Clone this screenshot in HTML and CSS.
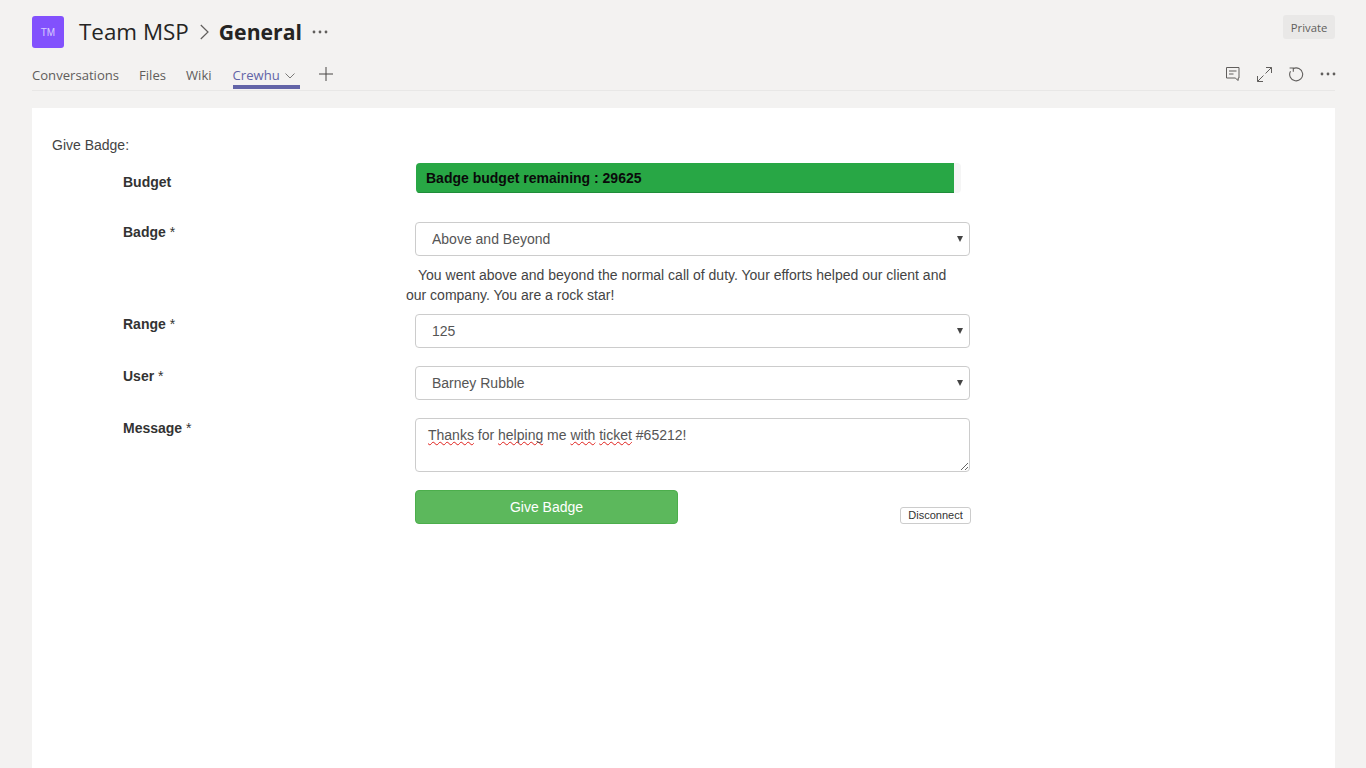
FILE: index.html
```html
<!DOCTYPE html>
<html lang="en">
<head>
<meta charset="utf-8">
<title>Team MSP - General</title>
<link rel="stylesheet" href="styles.css">
</head>
<body>
<div class="app">
  <header class="head">
    <div class="title-row">
      <div class="avatar">TM</div>
      <span class="team">Team MSP</span>
      <svg class="crumb" width="9" height="16" viewBox="0 0 9 16"><path d="M.8 1l7.200 7-7.200 7" fill="none" stroke="#605e5c" stroke-width="1.200"/></svg>
      <span class="channel">General</span>
      <svg class="dots title-dots" width="16" height="4" viewBox="0 0 16 4"><circle cx="2" cy="2" r="1.400"/><circle cx="8" cy="2" r="1.400"/><circle cx="14" cy="2" r="1.400"/></svg>
      <span class="private">Private</span>
    </div>
    <nav class="tabs">
      <a class="tab">Conversations</a>
      <a class="tab">Files</a>
      <a class="tab">Wiki</a>
      <a class="tab active">Crewhu<svg class="chev" width="10" height="6" viewBox="0 0 10 6"><path d="M.5.5l4.500 4.500 4.500-4.500" fill="none" stroke="#7a7977" stroke-width="1"/></svg></a>
      <svg class="plus" width="14" height="14" viewBox="0 0 14 14"><path d="M7 0v14M0 7h14" stroke="#484644" stroke-width="1"/></svg>
      <div class="tools">
        <svg width="14" height="14" viewBox="0 0 14 14" fill="none" stroke="#605e5c" stroke-width="1"><path d="M.5.500h12.500v10.500h-.8v2.500l-3-2.500H.5z"/><path d="M3 4h7.500M3 7h4.500"/></svg>
        <svg width="15" height="15" viewBox="0 0 15 15" fill="none" stroke="#605e5c" stroke-width="1"><path d="M8.500 6.500l6-6M9 .5h5.500V6M6.500 8.500l-6 6M.5 9v5.500H6"/></svg>
        <svg width="15" height="15" viewBox="0 0 15 15" fill="none" stroke="#605e5c" stroke-width="1.100"><path d="M4 1.700a6.500 6.500 0 1 1-2.500 2.500"/><path d="M.6 1h3.700v3.700"/></svg>
        <svg class="dots tool-dots" width="16" height="4" viewBox="0 0 16 4"><circle cx="2" cy="2" r="1.400"/><circle cx="8" cy="2" r="1.400"/><circle cx="14" cy="2" r="1.400"/></svg>
      </div>
    </nav>
  </header>
  <main class="panel">
    <p class="form-title">Give Badge:</p>
    <form class="form">
      <div class="row row-budget">
        <span class="label">Budget</span>
        <div class="progress"><div class="bar" style="width:538px">Badge budget remaining : 29625</div></div>
      </div>
      <div class="row row-badge">
        <label class="label">Badge <span class="req">*</span></label>
        <div>
          <div class="select"><select class="control"><option>Above and Beyond</option></select></div>
          <p class="desc">You went above and beyond the normal call of duty. Your efforts helped our client and our company. You are a rock star!</p>
        </div>
      </div>
      <div class="row">
        <label class="label">Range <span class="req">*</span></label>
        <div class="select"><select class="control"><option>125</option></select></div>
      </div>
      <div class="row">
        <label class="label">User <span class="req">*</span></label>
        <div class="select"><select class="control"><option>Barney Rubble</option></select></div>
      </div>
      <div class="row">
        <label class="label">Message <span class="req">*</span></label>
        <div class="textarea"><span class="typo">Thanks</span> for <span class="typo">helping</span> me <span class="typo">with</span> <span class="typo">ticket</span> #65212!</div>
      </div>
      <div class="row row-actions">
        <span></span>
        <div class="actions">
          <button type="button" class="give">Give Badge</button>
          <button type="button" class="disconnect">Disconnect</button>
        </div>
      </div>
    </form>
  </main>
</div>
</body>
</html>
```
FILE: styles.css
```css
* { box-sizing: border-box; }
html, body { height: 100%; }
body {
  margin: 0;
  background: #f3f2f1;
  font-family: "Liberation Sans", Arial, sans-serif;
  color: #333;
  overflow: hidden;
}
.app {
  height: 768px;
  padding: 0 31px 0 32px;
  display: flex;
  flex-direction: column;
}
.head {
  font-family: "Open Sans", "Noto Sans", sans-serif;
  height: 108px;
  flex: none;
}
.title-row {
  display: flex;
  align-items: center;
  height: 64px;
}
.avatar {
  width: 32px;
  height: 32px;
  border-radius: 3px;
  background: #8251fd;
  color: #d9ccff;
  font-size: 10px;
  display: flex;
  align-items: center;
  justify-content: center;
  font-family: "Liberation Sans", sans-serif;
}
.team {
  margin-left: 15px;
  margin-bottom: 2px;
  font-size: 22.400px;
  color: #252423;
}
.crumb { margin-left: 11px; }
.channel {
  margin-left: 10px;
  margin-bottom: 2px;
  font-size: 21.200px;
  font-weight: 700;
  color: #252423;
}
.dots { fill: #605e5c; }
.title-dots { margin-left: 10px; }
.private {
  margin-left: auto;
  align-self: flex-start;
  margin-top: 15px;
  height: 24px;
  width: 52px;
  background: #e9e8e7;
  border-radius: 3px;
  font-size: 11.300px;
  color: #605e5c;
  display: flex;
  align-items: center;
  justify-content: center;
}
.tabs {
  display: flex;
  align-items: flex-start;
  height: 27px;
  border-bottom: 1px solid #e8e7e6;
  font-size: 13.100px;
  color: #5f5d5b;
}
.tab {
  display: block;
  height: 25px;
  line-height: 22px;
  margin-right: 20px;
}
.tab.active {
  color: #6264a7;
  border-bottom: 4px solid #6264a7;
  height: 25px;
  width: 67px;
  margin-left: 1px;
  margin-right: 19px;
  white-space: nowrap;
}
.chev { margin-left: 5px; vertical-align: 1px; }
.plus { margin-top: 3px; }
.tools {
  margin-left: auto;
  margin-right: -1px;
  display: flex;
  align-items: center;
  gap: 17px;
  height: 18px;
  margin-top: 1px;
}
.tool-dots { margin-left: -1px; }
.panel {
  flex: 1;
  background: #fff;
  padding: 29px 0 0 20px;
  font-size: 14px;
  line-height: 16px;
}
.form-title { margin: 0; color: #444; }
.form { margin-left: 71px; width: 848px; margin-top: 6px; }
.row {
  display: grid;
  grid-template-columns: 292px 556px;
  margin-bottom: 18px;
}
.label { font-weight: 700; padding-top: 2px; color: #333; }
.req { font-weight: 400; }
.row-budget { margin-bottom: 29px; }
.row-budget .label { padding-top: 15px; }
.row-badge { margin-bottom: 9px; }
.progress {
  margin-left: 1px;
  width: 545px;
  height: 30px;
  background: #f5f5f5;
  border-radius: 4px;
  overflow: hidden;
  margin-top: 4px;
}
.bar {
  height: 30px;
  background: #28a745;
  border-bottom: 1px solid #1f8c39;
  color: #0a0a0a;
  font-weight: 700;
  padding-left: 10px;
  line-height: 30px;
}
.select { position: relative; width: 555px; }
.select::after {
  content: "";
  position: absolute;
  right: 7px;
  top: 14px;
  width: 0;
  height: 0;
  border-left: 3px solid transparent;
  border-right: 3px solid transparent;
  border-top: 6px solid #444;
  pointer-events: none;
}
.control {
  display: block;
  width: 555px;
  height: 34px;
  border: 1px solid #ccc;
  border-radius: 4px;
  background: #fff;
  padding: 6px 16px;
  font: 14px "Liberation Sans", sans-serif;
  color: #555;
  appearance: none;
}
.desc {
  margin: 9px 0 0 -9px;
  width: 552px;
  font-size: 14px;
  line-height: 20px;
  text-indent: 12px;
  color: #444;
}
.textarea {
  width: 555px;
  height: 54px;
  border: 1px solid #ccc;
  border-radius: 4px;
  padding: 7px 12px;
  color: #555;
  font-size: 14px;
  line-height: 18px;
  overflow: auto;
  resize: both;
}
.typo {
  text-decoration: underline wavy #e0201b 1px;
  text-decoration-skip-ink: none;
  text-underline-offset: 1px;
}
.row-actions { margin-bottom: 0; }
.actions {
  display: flex;
  align-items: flex-end;
  justify-content: space-between;
}
.give {
  width: 263px;
  height: 34px;
  border: 1px solid #4cae4c;
  border-radius: 4px;
  background: #5cb85c;
  color: #fff;
  font: 14px "Liberation Sans", sans-serif;
}
.disconnect {
  width: 71px;
  height: 17px;
  padding: 0 0 2px;
  border: 1px solid #ccc;
  border-radius: 3px;
  background: #fff;
  color: #333;
  font: 11px "Liberation Sans", sans-serif;
}
```
